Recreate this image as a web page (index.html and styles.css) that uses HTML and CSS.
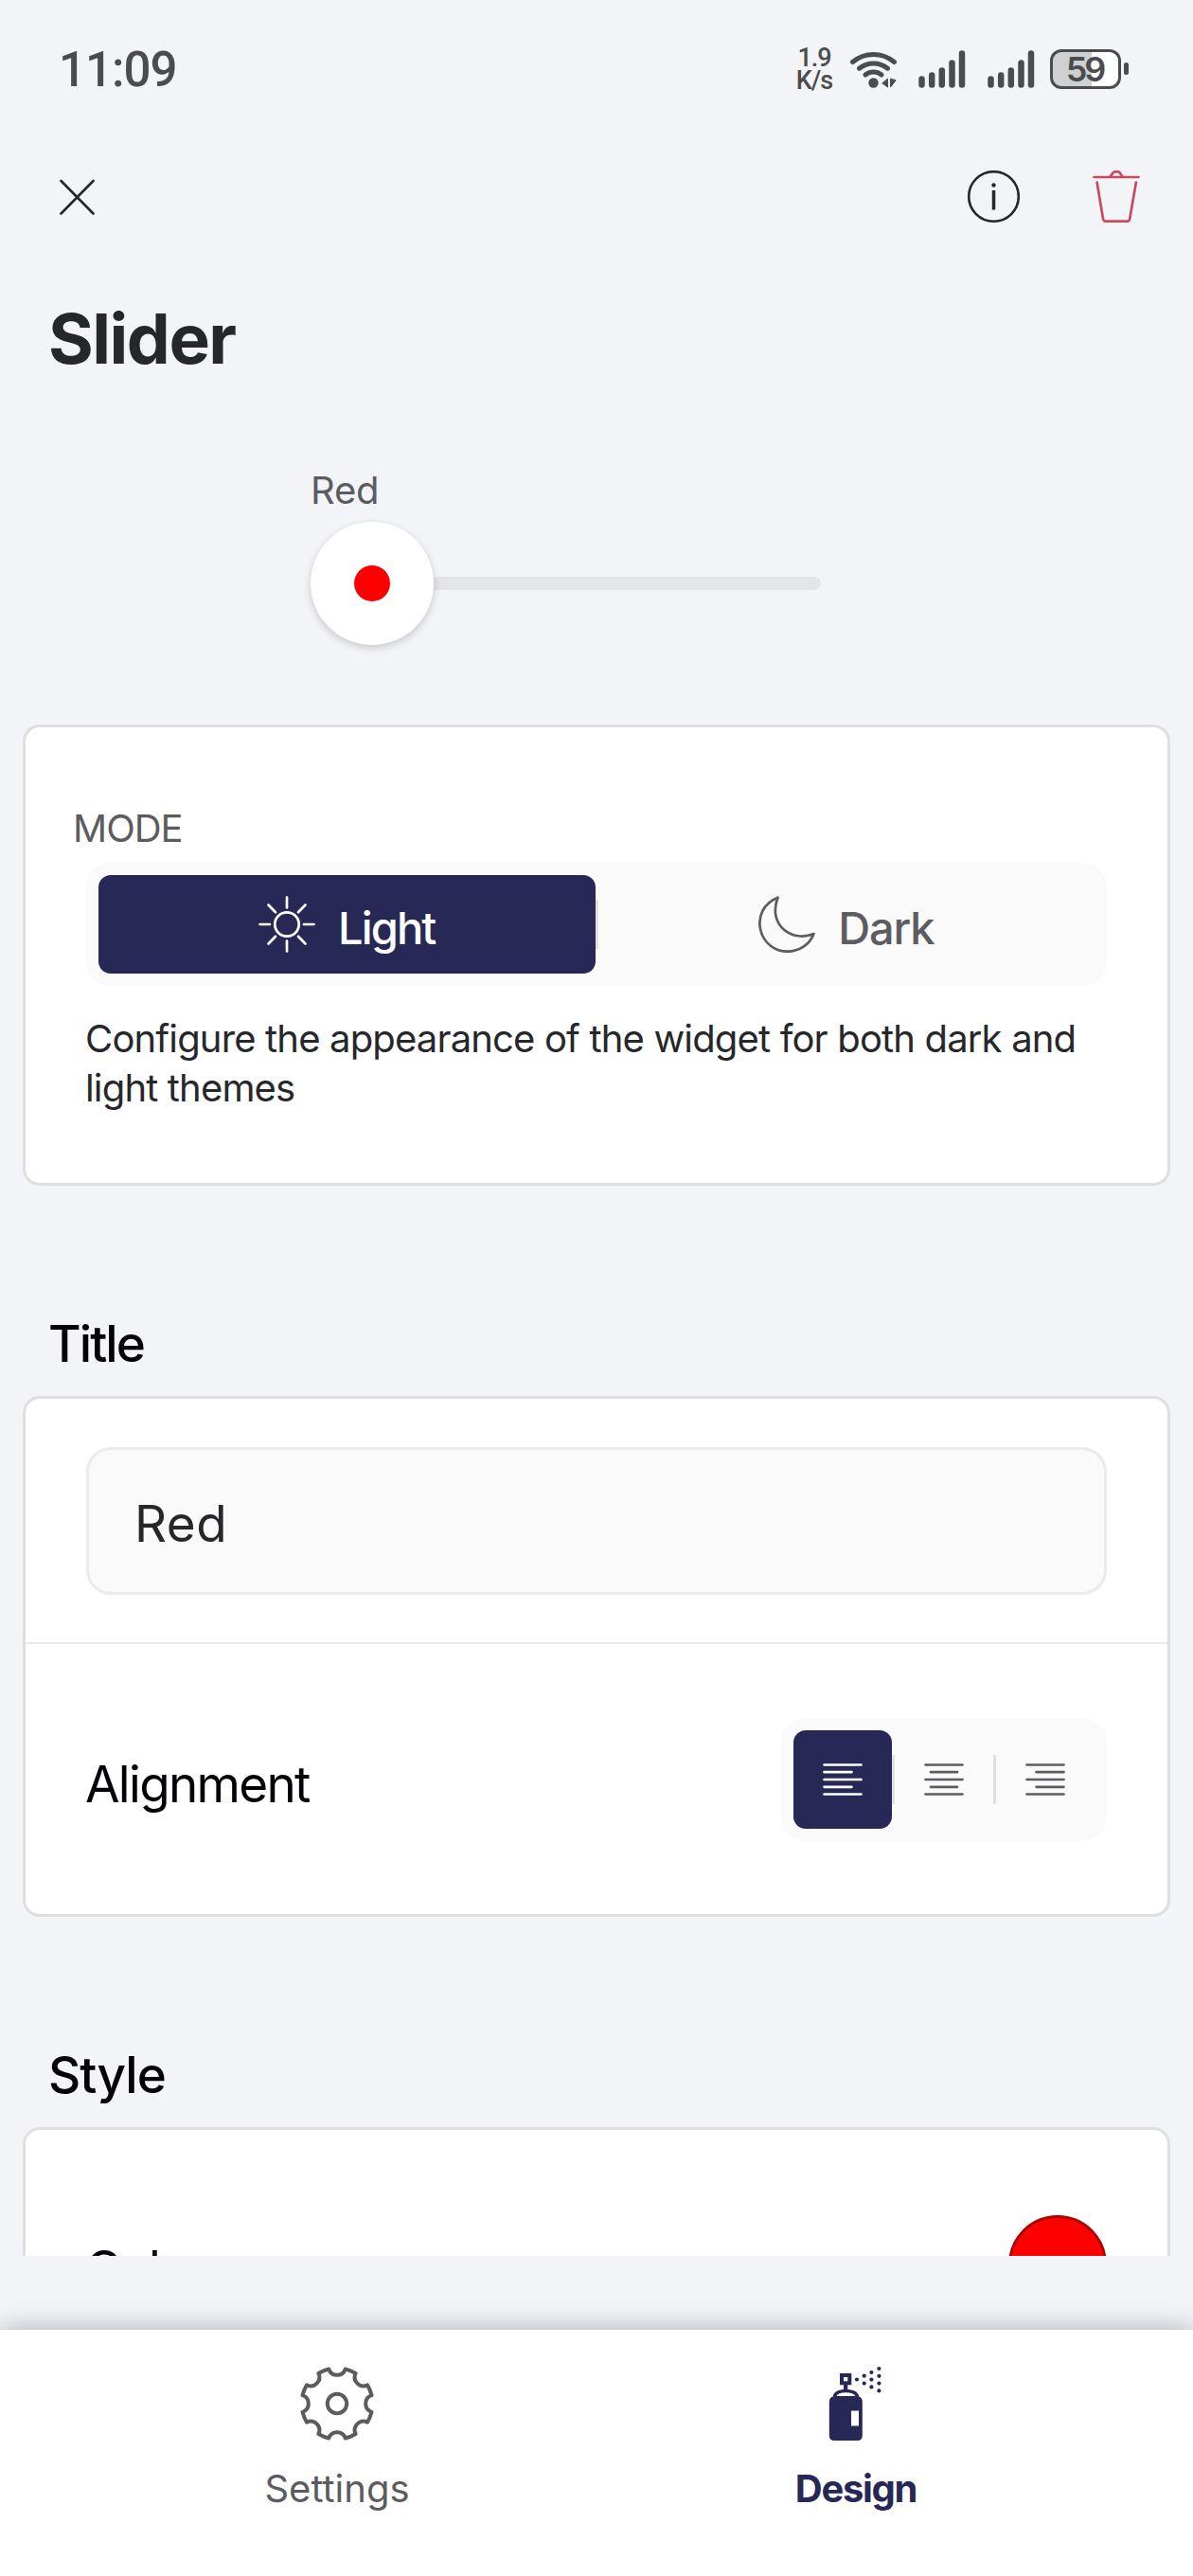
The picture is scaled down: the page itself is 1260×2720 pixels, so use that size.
FILE: index.html
```html
<!DOCTYPE html>
<html lang="en">
<head>
<meta charset="utf-8">
<title>Slider</title>
<link rel="stylesheet" href="styles.css">
</head>
<body>
<header class="status">
  <span class="clock">11:09</span>
  <div class="status-icons">
    <div class="speed"><span>1.9</span><span>K/s</span></div>
    <svg class="wifi" width="52" height="42" viewBox="0 0 52 42" fill="none" stroke="#4b4c4e" stroke-width="5" stroke-linecap="round">
      <path d="M3.5 13.5a34 34 0 0 1 44 0M10.500 20.300a24 24 0 0 1 30 0M17 27a14 14 0 0 1 17 0"/>
      <circle cx="25.500" cy="35.500" r="5.200" fill="#4b4c4e" stroke="none"/>
      <path d="M40.500 31.500v8.500l-5.500-4zM43.500 31.500v8.500l5.500-7z" fill="#4b4c4e" stroke="#4b4c4e" stroke-width="1" stroke-linejoin="round"/>
    </svg>
    <svg class="signal" width="50" height="42" viewBox="0 0 50 42" stroke="#4b4c4e" stroke-width="6.500" stroke-linecap="round">
      <path d="M3.500 31.500v6M14.200 27.500v10M24.800 22.500v15M35.500 14.500v23M46 4.500v33"/>
    </svg>
    <svg class="signal second" width="50" height="42" viewBox="0 0 50 42" stroke="#4b4c4e" stroke-width="6.500" stroke-linecap="round">
      <path d="M3.500 31.500v6M14.200 27.500v10M24.800 22.500v15M35.500 14.500v23M46 4.500v33"/>
    </svg>
    <div class="battery"><span>59</span></div>
    <i class="battery-tip"></i>
  </div>
</header>

<nav class="toolbar">
  <svg width="38" height="38" viewBox="0 0 38 38" stroke="#26272b" stroke-width="2.600" stroke-linecap="round"><path d="M2.500 2l34 34.500M36.500 2L2.500 36.500"/></svg>
  <div class="toolbar-actions">
    <svg width="56" height="56" viewBox="0 0 56 56"><circle cx="28.500" cy="27.500" r="26.300" fill="none" stroke="#26272b" stroke-width="2.600"/><circle cx="28.500" cy="15.500" r="2.200" fill="#26272b"/><path d="M28.500 21v20.500" stroke="#26272b" stroke-width="3.500"/></svg>
    <svg width="50" height="56" viewBox="0 0 50 56" fill="none" stroke="#c94a61" stroke-width="2.700" stroke-linecap="round" stroke-linejoin="round"><path d="M1.500 7h47M18.500 6.600l3.300-4.300q.5-.9 1.500-.9h3.800q1 0 1.500.9L31.500 6.600M4.600 12.500l6.400 38.500q.5 2.600 2.600 2.600h23q2.100 0 2.600-2.600L45.900 12.500"/></svg>
  </div>
</nav>

<main>
  <h1>Slider</h1>
  <div class="preview">
    <span class="label">Red</span>
    <div class="track"><div class="thumb"><i></i></div><div class="rail"></div></div>
  </div>

  <section class="card mode">
    <span class="label">MODE</span>
    <div class="segments">
      <div class="segment wide active">
        <svg width="60" height="60" viewBox="0 0 60 60" fill="none" stroke="#fff" stroke-width="2.700" stroke-linecap="round"><circle cx="30" cy="30" r="12.700"/><path d="M30 1.500v11M30 47.500v11M1.500 30h10.500M48 30h10.500M10.500 9.500l7.500 7.700M49.500 9.500L42 17.200M10.500 50.500l7.500-7.700M49.500 50.500L42 42.800"/></svg>
        <span>Light</span>
      </div>
      <i class="divider"></i>
      <div class="segment wide">
        <svg width="60" height="60" viewBox="0 0 60 60" fill="none" stroke="#5d5d61" stroke-width="2.700" stroke-linejoin="round"><path d="M20.500 1.700C5.500 7.500-1.500 22 2.500 37c3.500 13 15 21.700 28 21.700 12.500 0 23.500-7 28-18.700C37 49.500 9 32 20.500 1.700z"/></svg>
        <span>Dark</span>
      </div>
    </div>
    <p>Configure the appearance of the widget for both dark and light themes</p>
  </section>

  <h2 class="h-title">Title</h2>
  <section class="card">
    <div class="field-row"><div class="field">Red</div></div>
    <div class="row">
      <span class="name">Alignment</span>
      <div class="segments">
        <div class="segment active"><svg width="42" height="36" viewBox="0 0 42 36" stroke="#fff" stroke-width="2.700" stroke-linecap="round"><path d="M1.500 2.500h39M1.500 10.200h29M1.500 18h39M1.500 25.800h29M1.500 33.500h39"/></svg></div>
        <i class="divider"></i>
        <div class="segment"><svg width="42" height="36" viewBox="0 0 42 36" stroke="#5d5d61" stroke-width="2.700" stroke-linecap="round"><path d="M1.500 2.500h39M7 10.200h28M1.500 18h39M7 25.800h28M1.500 33.500h39"/></svg></div>
        <i class="divider"></i>
        <div class="segment"><svg width="42" height="36" viewBox="0 0 42 36" stroke="#5d5d61" stroke-width="2.700" stroke-linecap="round"><path d="M1.500 2.500h39M11.500 10.200h29M1.500 18h39M11.500 25.800h29M1.500 33.500h39"/></svg></div>
      </div>
    </div>
  </section>

  <h2 class="h-style">Style</h2>
  <section class="card style-card">
    <div class="row color-row"><span class="name">Color</span><i class="swatch"></i></div>
  </section>
</main>

<footer class="tabs">
  <div class="tab">
    <svg width="80" height="80" viewBox="-40 -40 80 80" fill="none" stroke="#5c5c60" stroke-width="4" stroke-linejoin="round"><circle r="10.200"/><path d="M-8.800-36.500A9.300 9.300 0 0 0 8.800-36.500 37.500 37.500 0 0 1 19.600-32 9.300 9.300 0 0 0 32-19.600 37.500 37.500 0 0 1 36.500-8.800 9.300 9.300 0 0 0 36.500 8.800 37.500 37.500 0 0 1 32 19.600 9.300 9.300 0 0 0 19.600 32 37.500 37.500 0 0 1 8.800 36.500 9.300 9.300 0 0 0-8.800 36.500 37.500 37.500 0 0 1-19.600 32 9.300 9.300 0 0 0-32 19.600 37.500 37.500 0 0 1-36.500 8.800 9.300 9.300 0 0 0-36.500-8.800 37.500 37.500 0 0 1-32-19.600 9.300 9.300 0 0 0-19.600-32 37.500 37.500 0 0 1-8.800-36.500z"/></svg>
    <span>Settings</span>
  </div>
  <div class="tab current">
    <svg width="80" height="80" viewBox="864 2498 80 80" fill="#272856"><path d="M881.500 2530.500c1.500-8 22-8 24 0" fill="#fff" stroke="#272856" stroke-width="3.600"/><rect x="889" y="2508" width="8.300" height="8.300" fill="none" stroke="#272856" stroke-width="4"/><path d="M891 2517h4.300v7H891zM880.500 2530h26q4.300 1.500 4.300 6v35.500q0 5.500-5.500 5.500h-24q-5.500 0-5.500-5.500V2536q0-4.500 4.700-6z"/><path fill="#fff" d="M899 2545.500h8v16h-8z"/><circle cx="905" cy="2512.500" r="2.100"/><circle cx="912.700" cy="2508.700" r="2.100"/><circle cx="912.700" cy="2516.600" r="2.100"/><circle cx="920.400" cy="2505" r="2.100"/><circle cx="920.400" cy="2512.600" r="2.100"/><circle cx="920.400" cy="2520.400" r="2.100"/><circle cx="928.400" cy="2501" r="2.100"/><circle cx="928.400" cy="2508.800" r="2.100"/><circle cx="928.400" cy="2516.600" r="2.100"/><circle cx="928.400" cy="2524.400" r="2.100"/></svg>
    <span>Design</span>
  </div>
</footer>
</body>
</html>
```
FILE: styles.css
```css
* { box-sizing: border-box; }
body {
  margin: 0;
  width: 1260px;
  height: 2720px;
  overflow: hidden;
  display: flex;
  flex-direction: column;
  background: #f3f4f8;
  color: #020208;
  font-family: Inter, "Liberation Sans", sans-serif;
}
svg { display: block; flex: none; }
h1, h2, p { margin: 0; }

.status {
  height: 145px;
  padding: 0 68px 0 62px;
  display: flex;
  align-items: center;
  justify-content: space-between;
  color: #4b4c4e;
}
.clock { padding-top: 2px; font: 500 51px/60px Roboto, sans-serif; letter-spacing: -1px; }
.status-icons { display: flex; align-items: center; }
.speed {
  width: 42px;
  display: flex;
  flex-direction: column;
  align-items: center;
  font: 500 27px/24px Roboto, sans-serif;
  letter-spacing: -1px;
}
.wifi { margin-left: 16px; }
.signal { margin-left: 21px; }
.signal.second { margin-left: 23px; }
.battery {
  margin-left: 16px;
  width: 75px;
  height: 42px;
  border: 3px solid #4b4c4e;
  border-radius: 12px;
  background: linear-gradient(90deg, #cfd0d2 41px, #fff 41px);
  display: flex;
  align-items: center;
  justify-content: center;
  font: 600 36px/36px Inter, sans-serif;
  letter-spacing: -3px;
}
.battery span { padding-right: 2px; }
.battery-tip {
  margin-left: 3px;
  width: 5px;
  height: 13px;
  border-radius: 3px;
  background: #4b4c4e;
}

.toolbar {
  height: 126px;
  padding: 0 56px 0 62px;
  display: flex;
  align-items: center;
  justify-content: space-between;
}
.toolbar-actions { display: flex; gap: 77px; }

main { height: 2111px; overflow: hidden; padding: 42px 24px 0; }
h1 {
  padding-left: 27px;
  color: #26272b;
  font-size: 73px;
  font-weight: 650;
  line-height: 90px;
  letter-spacing: -1.5px;
}
.label {
  display: block;
  color: #5c5c60;
  font-size: 40px;
  line-height: 52px;
  letter-spacing: -1px;
}
.preview { width: 539px; margin: 89px 0 84px 304px; }
.preview .label { letter-spacing: -0.2px; }
.track { margin-top: 7px; display: flex; align-items: center; }
.thumb {
  z-index: 1;
  width: 130px;
  height: 130px;
  border-radius: 50%;
  background: #fff;
  box-shadow: 0 3px 8px rgba(0, 0, 0, .18);
  display: flex;
  align-items: center;
  justify-content: center;
}
.thumb i { width: 38px; height: 38px; border-radius: 50%; background: #f00; }
.rail { flex: 1; height: 14px; margin-left: -8px; border-radius: 7px; background: #e4e5e9; }

.card {
  border: 3px solid #dfdfe1;
  border-radius: 18px;
  background: #fff;
}
.mode { height: 487px; padding: 81px 64px 0; }
.mode .label { margin-left: -14px; }
.segments {
  padding: 13px;
  border-radius: 26px;
  background: #fafafb;
  display: flex;
  align-items: center;
}
.mode .segments { margin-top: 10px; }
.segment {
  width: 104px;
  height: 104px;
  border-radius: 13px;
  display: flex;
  align-items: center;
  justify-content: center;
}
.segment.wide {
  flex: 1;
  gap: 24px;
  color: #5d5d61;
  font-size: 47px;
  font-weight: 550;
  letter-spacing: -1.2px;
}
.segment.wide.active { letter-spacing: -1.9px; }
.segment.wide span { padding-top: 6px; }
.segment.active { background: #272856; color: #fff; }
.divider { width: 3px; height: 52px; background: #e0e0e2; }
.mode p {
  margin: 30px -10px 0 -1px;
  color: #26272b;
  font-size: 40px;
  line-height: 52px;
  letter-spacing: -0.84px;
}

h2 {
  margin: 135px 0 23px 27px;
  font-size: 53px;
  font-weight: 550;
  line-height: 64px;
  letter-spacing: -1.9px;
}
.h-style { letter-spacing: -0.9px; }
.field-row { padding: 51px 64px 50px; border-bottom: 2px solid #e8e8e9; }
.field {
  height: 156px;
  padding: 5px 48px 0;
  border: 3px solid #ebebeb;
  border-radius: 26px;
  background: #fafafa;
  color: #26272b;
  font-size: 53px;
  line-height: 146px;
  letter-spacing: 0.5px;
}
.row {
  height: 285px;
  padding: 0 64px;
  display: flex;
  align-items: center;
  justify-content: space-between;
}
.name { margin-left: -1px; padding-top: 10px; font-size: 53px; letter-spacing: -1.7px; }
.style-card { height: 400px; }
.color-row { height: 284px; }
.swatch {
  width: 104px;
  height: 104px;
  border: 3px solid #b00000;
  border-radius: 50%;
  background: #f00;
}

.tabs {
  margin-top: 78px;
  height: 260px;
  padding: 38px 82px 0;
  background: #fff;
  box-shadow: 0 0 26px rgba(0, 0, 0, .3);
  display: flex;
}
.tab {
  flex: 1;
  display: flex;
  flex-direction: column;
  align-items: center;
  gap: 24px;
  color: #5c5c60;
  font-size: 40px;
  line-height: 52px;
}
.tab.current { color: #272856; font-weight: 700; }
.tab.current > span { letter-spacing: -1.3px; }
```
